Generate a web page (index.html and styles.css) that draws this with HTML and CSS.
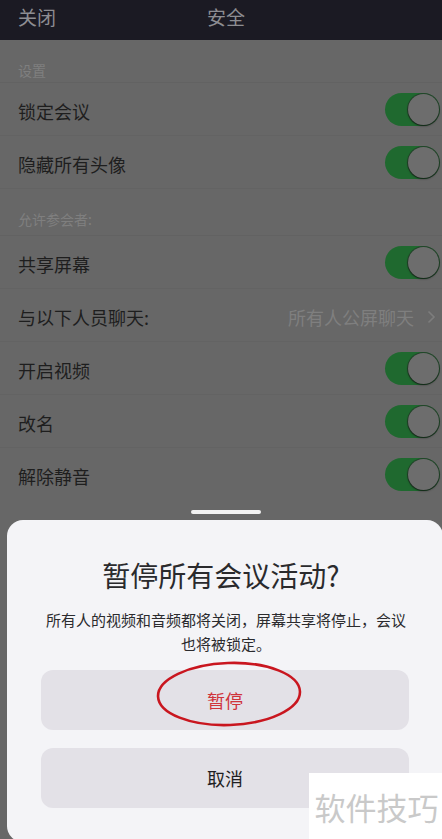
FILE: index.html
```html
<!DOCTYPE html>
<html lang="zh-CN">
<head>
<meta charset="utf-8">
<link rel="stylesheet" href="styles.css">
</head>
<body>
<div class="screen">
  <header class="topbar">
    <span class="top-left">关闭</span>
    <span class="top-title">安全</span>
  </header>
  <div class="list">
    <div class="section">设置</div>
    <div class="row"><span class="label">锁定会议</span><span class="toggle"><span class="knob"></span></span></div>
    <div class="row"><span class="label">隐藏所有头像</span><span class="toggle"><span class="knob"></span></span></div>
    <div class="section section-tall">允许参会者:</div>
    <div class="row"><span class="label">共享屏幕</span><span class="toggle"><span class="knob"></span></span></div>
    <div class="row"><span class="label">与以下人员聊天:</span><span class="value">所有人公屏聊天<svg class="chev" width="9" height="14" viewBox="0 0 9 14"><path d="M1.5 1.5 L7 7 L1.5 12.5" fill="none" stroke="#7d7d7d" stroke-width="1.6"/></svg></span></div>
    <div class="row"><span class="label">开启视频</span><span class="toggle"><span class="knob"></span></span></div>
    <div class="row"><span class="label">改名</span><span class="toggle"><span class="knob"></span></span></div>
    <div class="row"><span class="label">解除静音</span><span class="toggle"><span class="knob"></span></span></div>
  </div>
  <div class="handle"></div>

  <div class="sheet">
    <h1 class="sheet-title">暂停所有会议活动?</h1>
    <p class="sheet-desc">所有人的视频和音频都将关闭，屏幕共享将停止，会议<br>也将被锁定。</p>
    <div class="btn btn-danger">暂停
      <svg class="circle-mark" width="150" height="70" viewBox="0 0 150 70"><ellipse cx="75" cy="35" rx="71" ry="31" fill="none" stroke="#c9161f" stroke-width="2.6" transform="rotate(-2 75 35)"/></svg>
    </div>
    <div class="btn">取消</div>
  </div>

  <div class="watermark">软件技巧</div>
</div>
</body>
</html>
```

FILE: styles.css
```css
* { box-sizing: border-box; margin: 0; padding: 0; }
html, body { width: 442px; height: 839px; overflow: hidden; }
body {
  background: #676767;
  font-family: "Noto Sans CJK SC", "Noto Sans", sans-serif;
}
.screen { position: relative; width: 442px; height: 839px; overflow: hidden; }

.topbar {
  height: 40px;
  background: #1b1a23;
  display: flex;
  align-items: center;
  padding: 0 0 7px 18px;
  color: #8d8d92;
  font-size: 19px;
  line-height: 24px;
}
.top-left { width: 189px; }

.list { display: flex; flex-direction: column; }
.section {
  height: 43px;
  padding: 19px 0 0 18px;
  font-size: 14px;
  line-height: 22px;
  color: #7f7f7f;
  border-bottom: 1px solid #626262;
}
.section-tall { height: 47px; }
.row {
  height: 53px;
  display: flex;
  align-items: center;
  justify-content: space-between;
  padding: 3px 2px 0 18px;
  border-bottom: 1px solid #636363;
}
.row:last-child { border-bottom: none; }
.label { font-size: 18px; color: #1e1e1e; }
.value {
  font-size: 18px;
  color: #7f7f7f;
  display: flex;
  align-items: center;
  gap: 13px;
  padding-right: 4px;
}
.toggle {
  width: 55px;
  height: 33px;
  border-radius: 17px;
  background: #1f692f;
  position: relative;
  margin-top: -3px;
}
.knob {
  position: absolute;
  right: 1px;
  top: 1px;
  width: 31px;
  height: 31px;
  border-radius: 50%;
  background: #6d6d6d;
  box-shadow: 0 1px 2px rgba(0,0,0,0.55), 0 0 0 1px rgba(40,40,40,0.5);
}

.handle {
  width: 70px;
  height: 4px;
  border-radius: 2px;
  background: #f2f2f2;
  margin: 9px 0 0 191px;
}

.sheet {
  position: absolute;
  left: 7px;
  right: -1px;
  top: 520px;
  height: 322px;
  background: #f4f4f7;
  border-radius: 16px;
  display: flex;
  flex-direction: column;
  align-items: center;
  padding: 34px 32px 0 34px;
}
.sheet-title {
  font-size: 28px;
  font-weight: 400;
  color: #2a2a2d;
  line-height: 42px;
  margin-right: 10px;
}
.sheet-desc {
  margin-top: 12px;
  font-size: 15px;
  color: #2b2b2e;
  line-height: 24px;
  text-align: center;
}
.btn {
  position: relative;
  width: 368px;
  height: 60px;
  border-radius: 12px;
  background: #e3e1e7;
  display: flex;
  align-items: center;
  justify-content: center;
  font-size: 18px;
  color: #1f1f22;
  margin-top: 18px;
  margin-left: -2px;
}
.btn-danger { color: #d0343b; margin-top: 14px; }
.circle-mark { position: absolute; left: 113px; top: -11px; }

.watermark {
  position: absolute;
  right: 0;
  bottom: 0;
  width: 133px;
  height: 66px;
  background: #ffffff;
  color: #c9c9c9;
  font-size: 31px;
  display: flex;
  align-items: center;
  justify-content: center;
  padding-left: 2px;
}
```
